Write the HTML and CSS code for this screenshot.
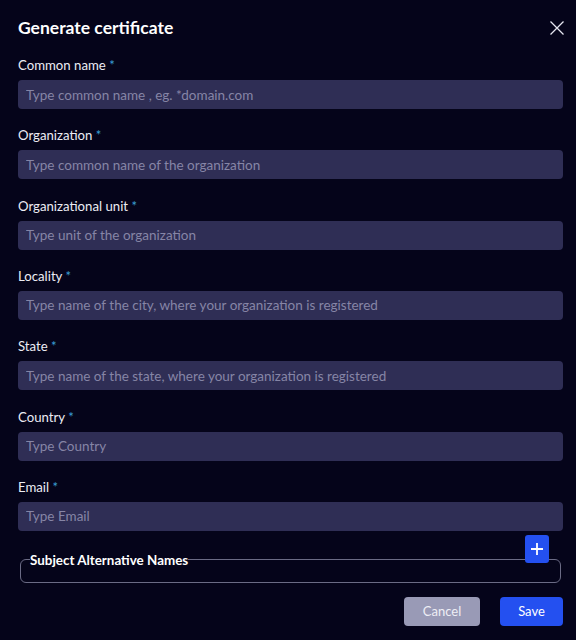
FILE: index.html
```html
<!DOCTYPE html>
<html>
<head>
<meta charset="utf-8">
<link rel="stylesheet" href="styles.css">
</head>
<body>
<div class="dialog">
  <div class="header">
    <h1 class="title">Generate certificate</h1>
    <button class="close" aria-label="Close">
      <svg width="14" height="14" viewBox="0 0 14 14"><path d="M0.5 0.5L13.5 13.5M13.5 0.5L0.5 13.5" stroke="#e6e6f0" stroke-width="1.3" fill="none"/></svg>
    </button>
  </div>
  <div class="fields">
    <div class="field"><label class="label">Common name <span class="req">*</span></label><input class="input" placeholder="Type common name , eg. *domain.com"></div>
    <div class="field"><label class="label">Organization <span class="req">*</span></label><input class="input" placeholder="Type common name of the organization"></div>
    <div class="field"><label class="label">Organizational unit <span class="req">*</span></label><input class="input" placeholder="Type unit of the organization"></div>
    <div class="field"><label class="label">Locality <span class="req">*</span></label><input class="input" placeholder="Type name of the city, where your organization is registered"></div>
    <div class="field"><label class="label">State <span class="req">*</span></label><input class="input" placeholder="Type name of the state, where your organization is registered"></div>
    <div class="field"><label class="label">Country <span class="req">*</span></label><input class="input" placeholder="Type Country"></div>
    <div class="field"><label class="label">Email <span class="req">*</span></label><input class="input" placeholder="Type Email"></div>
  </div>
  <div class="san">
    <fieldset class="san-box"><legend class="san-legend">Subject Alternative Names</legend></fieldset>
    <button class="add" aria-label="Add">
      <svg width="14" height="14" viewBox="0 0 14 14"><path d="M7 1V13M1 7H13" stroke="#fff" stroke-width="1.8" fill="none"/></svg>
    </button>
  </div>
  <div class="actions">
    <button class="btn cancel">Cancel</button>
    <button class="btn save">Save</button>
  </div>
</div>
</body>
</html>
```
FILE: styles.css
```css
html, body {
  margin: 0;
  padding: 0;
  background: #05041a;
}
body {
  font-family: Lato, "Open Sans", sans-serif;
  color: #e8e8f2;
}
.dialog {
  padding: 18px 13px 0 18px;
  width: 576px;
  box-sizing: border-box;
}
.header {
  display: flex;
  justify-content: space-between;
  align-items: center;
  height: 20px;
  margin-bottom: 19px;
}
.title {
  margin: 0;
  font-size: 17.5px;
  font-weight: 700;
  color: #ffffff;
  line-height: 20px;
}
.close {
  background: none;
  border: 0;
  padding: 0;
  margin-right: -1px;
  width: 14px;
  height: 14px;
  display: flex;
}
.fields {
  display: flex;
  flex-direction: column;
  gap: 18.33px;
}
.field {
  display: flex;
  flex-direction: column;
  gap: 7px;
}
.label {
  font-size: 13.2px;
  line-height: 16px;
  color: #ececf4;
}
.req {
  color: #3aa0d8;
}
.input {
  height: 29px;
  box-sizing: border-box;
  border: 0;
  border-radius: 4px;
  background: #2f2e55;
  padding: 0 8px;
  font-family: inherit;
  font-size: 13.5px;
  color: #e8e8f2;
  outline: none;
}
.input::placeholder {
  color: #8685a6;
}
.san {
  position: relative;
  margin-top: 22px;
  padding: 0 2px;
}
.san-box {
  margin: 0;
  border: 1px solid #6b6b85;
  border-radius: 6px;
  height: 30px;
  box-sizing: border-box;
  padding: 0 9px;
}
.san-legend {
  font-size: 13.4px;
  font-weight: 700;
  color: #ffffff;
  padding: 0;
  line-height: 14px;
}
.add {
  position: absolute;
  right: 14px;
  top: -18px;
  width: 24px;
  height: 28px;
  border: 0;
  border-radius: 3px;
  background: #2450f0;
  display: flex;
  align-items: center;
  justify-content: center;
  padding: 0;
}
.actions {
  display: flex;
  justify-content: flex-end;
  gap: 20px;
  margin-top: 14px;
}
.btn {
  height: 29px;
  border: 0;
  border-radius: 4px;
  font-family: inherit;
  font-size: 13px;
  color: #ffffff;
  padding: 0;
}
.cancel {
  width: 76px;
  background: #999ab6;
  color: #eeeef5;
}
.save {
  width: 63px;
  background: #2450f0;
}
```
